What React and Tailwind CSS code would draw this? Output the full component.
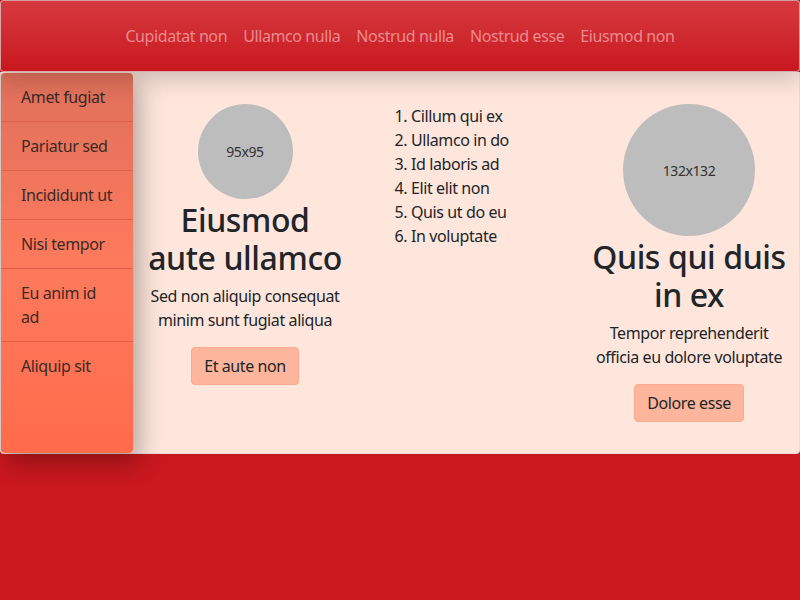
const navLinks = ["Cupidatat non", "Ullamco nulla", "Nostrud nulla", "Nostrud esse", "Eiusmod non"];
const sideItems = ["Amet fugiat", "Pariatur sed", "Incididunt ut", "Nisi tempor", "Eu anim id ad", "Aliquip sit"];
const listItems = ["Cillum qui ex", "Ullamco in do", "Id laboris ad", "Elit elit non", "Quis ut do eu", "In voluptate"];

function Feature({ size, label, title, text, button }) {
  return (
    <div className="flex w-[200px] flex-col items-center text-center">
      <div
        className="flex items-center justify-center rounded-full bg-[#bdbdbd] text-[14px] text-[#333]"
        style={{ width: size, height: size }}
      >
        {label}
      </div>
      <h2 className="mb-[6px] mt-[2px] text-[32px] font-medium leading-[1.2] text-[#212529]">{title}</h2>
      <p className="mb-[15px] text-base leading-6 text-[#212529]">{text}</p>
      <button className="rounded border border-[#f8ab8f] bg-[#fdb59b] px-3 py-1.5 text-base leading-6 text-[#212529]">
        {button}
      </button>
    </div>
  );
}

export default function App() {
  return (
    <div className="min-h-[600px] bg-[#c9181e] font-['Noto_Sans',sans-serif] tracking-[-0.025em]">
      <header className="relative z-20 flex h-[72px] items-center justify-center rounded border border-[#d9d9d9]/70 bg-gradient-to-b from-[#d6383e] to-[#c8161d] shadow-[0_8px_24px_rgba(0,0,0,0.18)]">
        <nav className="flex">
          {navLinks.map((l) => (
            <a key={l} className="px-2 text-base leading-6 text-[#ec8a90]">
              {l}
            </a>
          ))}
        </nav>
      </header>

      <div className="relative flex rounded-b border border-t-0 border-[#d9d9d9]/70 bg-[#fee6dc]">
        <aside className="relative z-10 mt-px w-[132px] shrink-0 overflow-hidden rounded bg-gradient-to-b from-[#df705b] via-[#fe7a5d] to-[#ff6b4b] shadow-[6px_10px_24px_rgba(0,0,0,0.3)]">
          {sideItems.map((s, i) => (
            <div
              key={s}
              className={`px-5 py-3 text-base leading-6 text-[#3b2a26] ${
                i < sideItems.length - 1 ? "border-b border-[#e0604a]" : ""
              }`}
            >
              {s}
            </div>
          ))}
        </aside>

        <main className="flex flex-1 items-start pb-[31px] pt-8">
          <div className="ml-3">
            <Feature
              size={95}
              label="95x95"
              title="Eiusmod aute ullamco"
              text="Sed non aliquip consequat minim sunt fugiat aliqua"
              button="Et aute non"
            />
          </div>
          <ol className="ml-[34px] list-decimal pl-8 text-base leading-6 text-[#212529]">
            {listItems.map((l) => (
              <li key={l}>{l}</li>
            ))}
          </ol>
          <div className="ml-auto mr-[10px]">
            <Feature
              size={132}
              label="132x132"
              title="Quis qui duis in ex"
              text="Tempor reprehenderit officia eu dolore voluptate"
              button="Dolore esse"
            />
          </div>
        </main>
      </div>
    </div>
  );
}
